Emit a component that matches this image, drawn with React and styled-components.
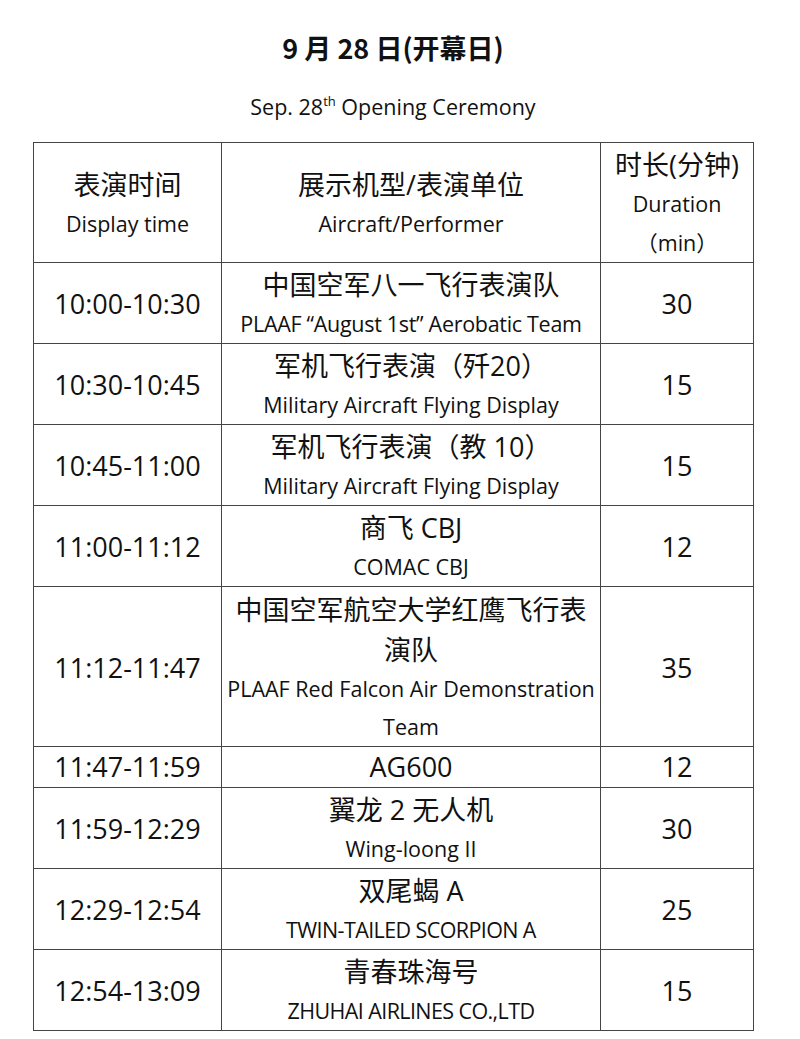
import React from "react";
import styled, { createGlobalStyle } from "styled-components";

const Global = createGlobalStyle`
  html, body { margin: 0; padding: 0; background: #fff; }
  body { font-family: "Open Sans", "Noto Sans CJK SC", sans-serif; color: #111; }
`;

const Page = styled.div`
  width: 720px;
  margin-left: 33px;
  padding-top: 32px;
`;

const Title = styled.h1`
  margin: 0;
  text-align: center;
  font-family: "Noto Sans CJK SC", sans-serif;
  font-weight: 700;
  font-size: 27px;
  line-height: 32px;
`;

const Subtitle = styled.div`
  margin-top: 28px;
  text-align: center;
  font-size: 21.5px;
  line-height: 30px;
  sup { font-size: 13px; line-height: 0; vertical-align: 9px; }
`;

const Table = styled.table`
  margin-top: 20px;
  width: 720px;
  border-collapse: collapse;
  table-layout: fixed;
`;

const Row = styled.tr`
  height: ${(p) => p.$h - 1}px;
`;

const Cell = styled.td`
  border: 1px solid #444;
  padding: ${(p) => (p.$compact ? "0" : "2px")} 0 0 0;
  text-align: center;
  vertical-align: middle;
`;

const TimeText = styled.div`
  font-size: 27px;
  line-height: 38px;
  white-space: nowrap;
`;

const ZhLine = styled.div`
  font-size: 27px;
  line-height: 40px;
  white-space: nowrap;
`;

const EnLine = styled.div`
  font-size: 21.5px;
  line-height: 38px;
  white-space: nowrap;
  letter-spacing: ${(p) => p.$ls || 0}px;
`;

const Cjk = styled.span`
  font-family: "Noto Sans CJK SC", sans-serif;
`;

const rows = [
  { time: "10:00-10:30", zh: ["中国空军八一飞行表演队"], en: ["PLAAF “August 1st” Aerobatic Team"], ls: -0.3, dur: 30, h: 81 },
  { time: "10:30-10:45", zh: ["军机飞行表演（歼20）"], en: ["Military Aircraft Flying Display"], dur: 15, h: 81 },
  { time: "10:45-11:00", zh: ["军机飞行表演（教 10）"], en: ["Military Aircraft Flying Display"], dur: 15, h: 81 },
  { time: "11:00-11:12", zh: ["商飞 CBJ"], en: ["COMAC CBJ"], dur: 12, h: 81 },
  { time: "11:12-11:47", zh: ["中国空军航空大学红鹰飞行表", "演队"], en: ["PLAAF Red Falcon Air Demonstration", "Team"], dur: 35, h: 161 },
  { time: "11:47-11:59", zh: ["AG600"], en: [], dur: 12, h: 41, compact: true },
  { time: "11:59-12:29", zh: ["翼龙 2 无人机"], en: ["Wing-loong II"], dur: 30, h: 81 },
  { time: "12:29-12:54", zh: ["双尾蝎 A"], en: ["TWIN-TAILED SCORPION A"], ls: -0.6, dur: 25, h: 81 },
  { time: "12:54-13:09", zh: ["青春珠海号"], en: ["ZHUHAI AIRLINES CO.,LTD"], ls: -0.6, dur: 15, h: 81 },
];

export default function App() {
  return (
    <Page>
      <Global />
      <Title>9 月 28 日(开幕日)</Title>
      <Subtitle>
        Sep. 28<sup>th</sup> Opening Ceremony
      </Subtitle>
      <Table>
        <colgroup>
          <col style={{ width: 188 }} />
          <col style={{ width: 379 }} />
          <col style={{ width: 153 }} />
        </colgroup>
        <tbody>
          <Row $h={120}>
            <Cell>
              <ZhLine>表演时间</ZhLine>
              <EnLine>Display time</EnLine>
            </Cell>
            <Cell>
              <ZhLine>展示机型/表演单位</ZhLine>
              <EnLine>Aircraft/Performer</EnLine>
            </Cell>
            <Cell>
              <ZhLine>时长(分钟)</ZhLine>
              <EnLine>Duration</EnLine>
              <EnLine>
                <Cjk>（</Cjk>min<Cjk>）</Cjk>
              </EnLine>
            </Cell>
          </Row>
          {rows.map((r) => (
            <Row key={r.time} $h={r.h}>
              <Cell $compact={r.compact}>
                <TimeText>{r.time}</TimeText>
              </Cell>
              <Cell $compact={r.compact}>
                {r.zh.map((z, i) => (
                  <ZhLine key={i}>{z}</ZhLine>
                ))}
                {r.en.map((e, i) => (
                  <EnLine key={i} $ls={r.ls}>
                    {e}
                  </EnLine>
                ))}
              </Cell>
              <Cell $compact={r.compact}>
                <TimeText>{r.dur}</TimeText>
              </Cell>
            </Row>
          ))}
        </tbody>
      </Table>
    </Page>
  );
}
